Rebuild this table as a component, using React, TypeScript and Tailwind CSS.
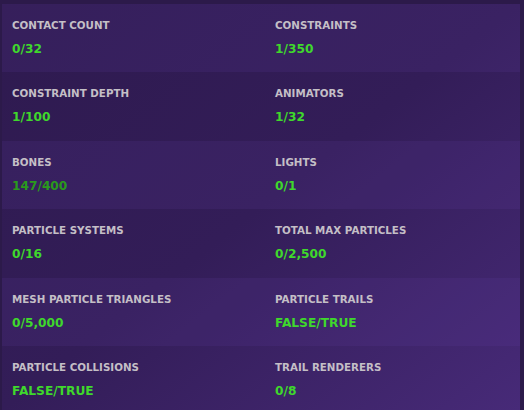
import React from 'react';

const rows = [
  [
    { label: 'Contact Count', value: '0/32' },
    { label: 'Constraints', value: '1/350' },
  ],
  [
    { label: 'Constraint Depth', value: '1/100' },
    { label: 'Animators', value: '1/32' },
  ],
  [
    { label: 'Bones', value: '147/400', warn: true },
    { label: 'Lights', value: '0/1' },
  ],
  [
    { label: 'Particle Systems', value: '0/16' },
    { label: 'Total Max Particles', value: '0/2,500' },
  ],
  [
    { label: 'Mesh Particle Triangles', value: '0/5,000' },
    { label: 'Particle Trails', value: 'False/True' },
  ],
  [
    { label: 'Particle Collisions', value: 'False/True' },
    { label: 'Trail Renderers', value: '0/8' },
  ],
];

const App = () => {
  return (
    <div className="w-[524px] h-[410px] overflow-hidden bg-[#2c1a4a] pt-1 pl-[2px] pr-1 font-['DejaVu_Sans',sans-serif]">
      <div className="h-full bg-gradient-to-br from-[#2e1a4f] via-[#331d58] to-[#472a78]">
        {rows.map((row, i) => (
          <div
            key={i}
            className={`grid grid-cols-[263px_1fr] h-[68.4px] ${i % 2 === 0 ? 'bg-[#6a45b0]/[0.13]' : ''}`}
          >
            {row.map((cell) => (
              <div key={cell.label} className="pl-[10px] pt-[13px]">
                <div className="text-[10.3px] leading-4 font-bold uppercase text-[#c4bfc6]">
                  {cell.label}
                </div>
                <div
                  className={`mt-[8px] text-[12.2px] leading-4 font-bold uppercase ${cell.warn ? 'text-[#2a9a1c]' : 'text-[#3fd82c]'}`}
                >
                  {cell.value}
                </div>
              </div>
            ))}
          </div>
        ))}
      </div>
    </div>
  );
};

export default App;
